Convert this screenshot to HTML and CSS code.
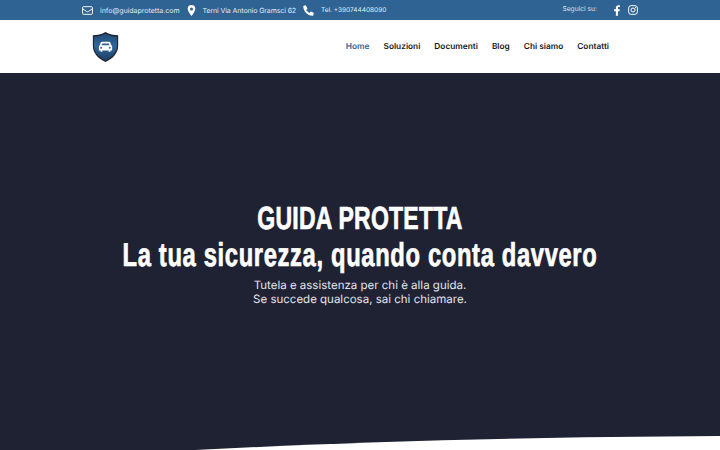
FILE: index.html
```html
<!DOCTYPE html>
<html lang="it">
<head>
  <meta charset="UTF-8" />
  <title>Guida Protetta</title>
  <link rel="stylesheet" href="styles.css">
</head>
<body>
<div class="topbar">
  <div class="contacts">
    <svg class="ico ico-mail" viewBox="0 0 20 16"><rect x="1" y="1" width="18" height="14" rx="2" fill="none" stroke="#fff" stroke-width="1.7"/><path d="M1.5 5 L8.3 9.8 Q10 11 11.7 9.8 L18.5 5" fill="none" stroke="#fff" stroke-width="1.7"/></svg>
    <span class="contact-text">info@guidaprotetta.com</span>
    <svg class="ico ico-pin" viewBox="0 0 12 16"><path fill="#fff" fill-rule="evenodd" d="M6 0a5.6 5.6 0 0 0-5.6 5.6C.4 8.8 4 13.6 6 16c2-2.4 5.600-7.200 5.600-10.400A5.600 5.600 0 0 0 6 0zm0 3.500a2.200 2.200 0 1 1 0 4.400 2.200 2.200 0 0 1 0-4.400z"/></svg>
    <span class="contact-text contact-addr">Terni Via Antonio Gramsci 62</span>
    <svg class="ico ico-phone" viewBox="0 0 16 16"><path fill="#fff" d="M3.800.4 1.200 1.100C.7 1.300.4 1.700.4 2.200.7 9.500 6.500 15.300 13.800 15.600c.5 0 .9-.3 1.100-.8l.7-2.600c.1-.5-.1-1-.6-1.200l-3-1.300c-.4-.2-.9-.1-1.200.3l-1.200 1.500C7.400 10.400 5.600 8.600 4.500 7.400L6 6.200c.4-.3.500-.8.300-1.200L5 2C4.800 1.500 4.300.3 3.800.4z"/></svg>
    <span class="contact-text contact-tel">Tel. +390744408090</span>
  </div>
  <div class="social">
    <span class="social-label">Seguici su:</span>
    <svg class="ico ico-fb" viewBox="0 0 9 16"><path fill="#fff" d="M8.300 9 8.700 6.100H5.900V4.200c0-.8.400-1.600 1.600-1.600h1.300V.1S7.700 0 6.600 0C4.300 0 2.800 1.400 2.800 3.900v2.200H.2V9h2.600v7h3.100V9z"/></svg>
    <svg class="ico ico-ig" viewBox="0 0 16 16"><rect x="1" y="1" width="14" height="14" rx="4" fill="none" stroke="#fff" stroke-width="1.600"/><circle cx="8" cy="8" r="3.200" fill="none" stroke="#fff" stroke-width="1.600"/><circle cx="12" cy="4" r="1" fill="#fff"/></svg>
  </div>
</div>

<header class="navbar">
  <svg class="logo" viewBox="0 0 28 32">
    <defs>
      <linearGradient id="shieldFill" x1="0" y1="0" x2="0" y2="1">
        <stop offset="0" stop-color="#1f4a78"/>
        <stop offset="0.45" stop-color="#2f6699"/>
        <stop offset="1" stop-color="#1d3f66"/>
      </linearGradient>
    </defs>
    <path fill="#1f2433" d="M14 0 C18 2.500 23 3.500 27.500 3.500 V15 C27.500 23 21 29 14 32 C7 29 .5 23 .5 15 V3.500 C5 3.500 10 2.500 14 0z"/>
    <path fill="url(#shieldFill)" d="M14 1.800 C18 4 22.500 5 26.300 5.100 V15 C26.300 22 20 27.800 14 30.500 C8 27.800 1.700 22 1.700 15 V5.100 C5.500 5 10 4 14 1.800z"/>
    <path fill="#fff" fill-rule="evenodd" d="M10.300 10.500h7.400c.7 0 1.200.4 1.500 1l.9 2.700c.6.300 1 .9 1 1.600v3.900h-1.800v1.400h-1.900v-1.400H10.600v1.400H8.700v-1.400H6.900v-3.900c0-.7.400-1.300 1-1.600l.9-2.700c.3-.6.800-1 1.500-1zm.2 1.700-.7 1.800h8.400l-.7-1.800zM9.400 15.800a1.000 1.000 0 1 0 0 2 1.000 1.000 0 0 0 0-2zm9.200 0a1.000 1.000 0 1 0 0 2 1.000 1.000 0 0 0 0-2z"/>
  </svg>
  <nav class="menu">
    <a class="menu-link is-active">Home</a>
    <a class="menu-link">Soluzioni</a>
    <a class="menu-link">Documenti</a>
    <a class="menu-link">Blog</a>
    <a class="menu-link">Chi siamo</a>
    <a class="menu-link">Contatti</a>
  </nav>
</header>

<section class="hero">
  <h1 class="hero-title">GUIDA PROTETTA</h1>
  <h2 class="hero-sub">La tua sicurezza, quando conta davvero</h2>
  <p class="hero-text">Tutela e assistenza per chi è alla guida.<br>Se succede qualcosa, sai chi chiamare.</p>
  <svg class="hero-curve" viewBox="0 0 720 16" preserveAspectRatio="none"><path fill="#fff" d="M195 16 C350 8 520 3 720 2 V16z"/></svg>
</section>
</body>
</html>
```

FILE: styles.css
```css
* { box-sizing: border-box; }
body {
  margin: 0;
  height: 450px;
  overflow: hidden;
  font-family: 'Inter', 'Open Sans', sans-serif;
  background: #fff;
  text-rendering: geometricPrecision;
}
.topbar {
  height: 20px;
  background: #2f6394;
  color: #fff;
  display: flex;
  justify-content: space-between;
  align-items: center;
  padding: 0 82px;
}
.contacts, .social {
  display: flex;
  align-items: center;
}
.contact-text {
  font-size: 7px;
  color: #e3ebf3;
  margin-right: 7px;
}
.contact-addr { letter-spacing: -0.1px; }
.contact-tel { font-size: 6.5px; }
.ico { display: block; flex: none; }
.ico-mail { width: 11px; height: 9px; margin-right: 7px; }
.ico-pin { width: 9px; height: 11px; margin-right: 7px; }
.ico-phone { width: 11px; height: 11px; margin-right: 7px; }
.social-label {
  font-size: 6.7px;
  color: #d5e0ec;
  margin-right: 17px;
  margin-top: -3px;
}
.ico-fb { width: 6px; height: 11px; margin-right: 8px; }
.ico-ig { width: 10px; height: 10px; }
.navbar {
  height: 53px;
  display: flex;
  justify-content: space-between;
  align-items: center;
  padding: 0 111px 0 92px;
}
.logo { width: 27px; height: 30px; }
.menu {
  display: flex;
  gap: 14px;
}
.menu-link {
  font-size: 8.3px;
  font-weight: 600;
  color: #16181d;
}
.menu-link.is-active { color: #2f6394; }
.hero {
  position: relative;
  height: 377px;
  background: #1f2233;
  color: #fff;
  text-align: center;
  padding-top: 127px;
}
/* no condensed face installed, so the bold sans is squeezed */
.hero-title, .hero-sub {
  margin: 0;
  font-family: 'Liberation Sans', sans-serif;
  font-weight: 700;
  white-space: nowrap;
  transform: scaleX(0.72);
  -webkit-text-stroke: 0.7px #fff;
}
.hero-title {
  font-size: 32px;
  line-height: 36px;
  letter-spacing: 0.3px;
}
.hero-sub {
  font-size: 33px;
  line-height: 38px;
  letter-spacing: 0.9px;
}
.hero-text {
  margin: 5px 0 0;
  font-size: 11.5px;
  line-height: 13.5px;
  color: #e4e5ea;
}
.hero-curve {
  position: absolute;
  left: 0;
  bottom: 0;
  width: 720px;
  height: 16px;
  display: block;
}
```
